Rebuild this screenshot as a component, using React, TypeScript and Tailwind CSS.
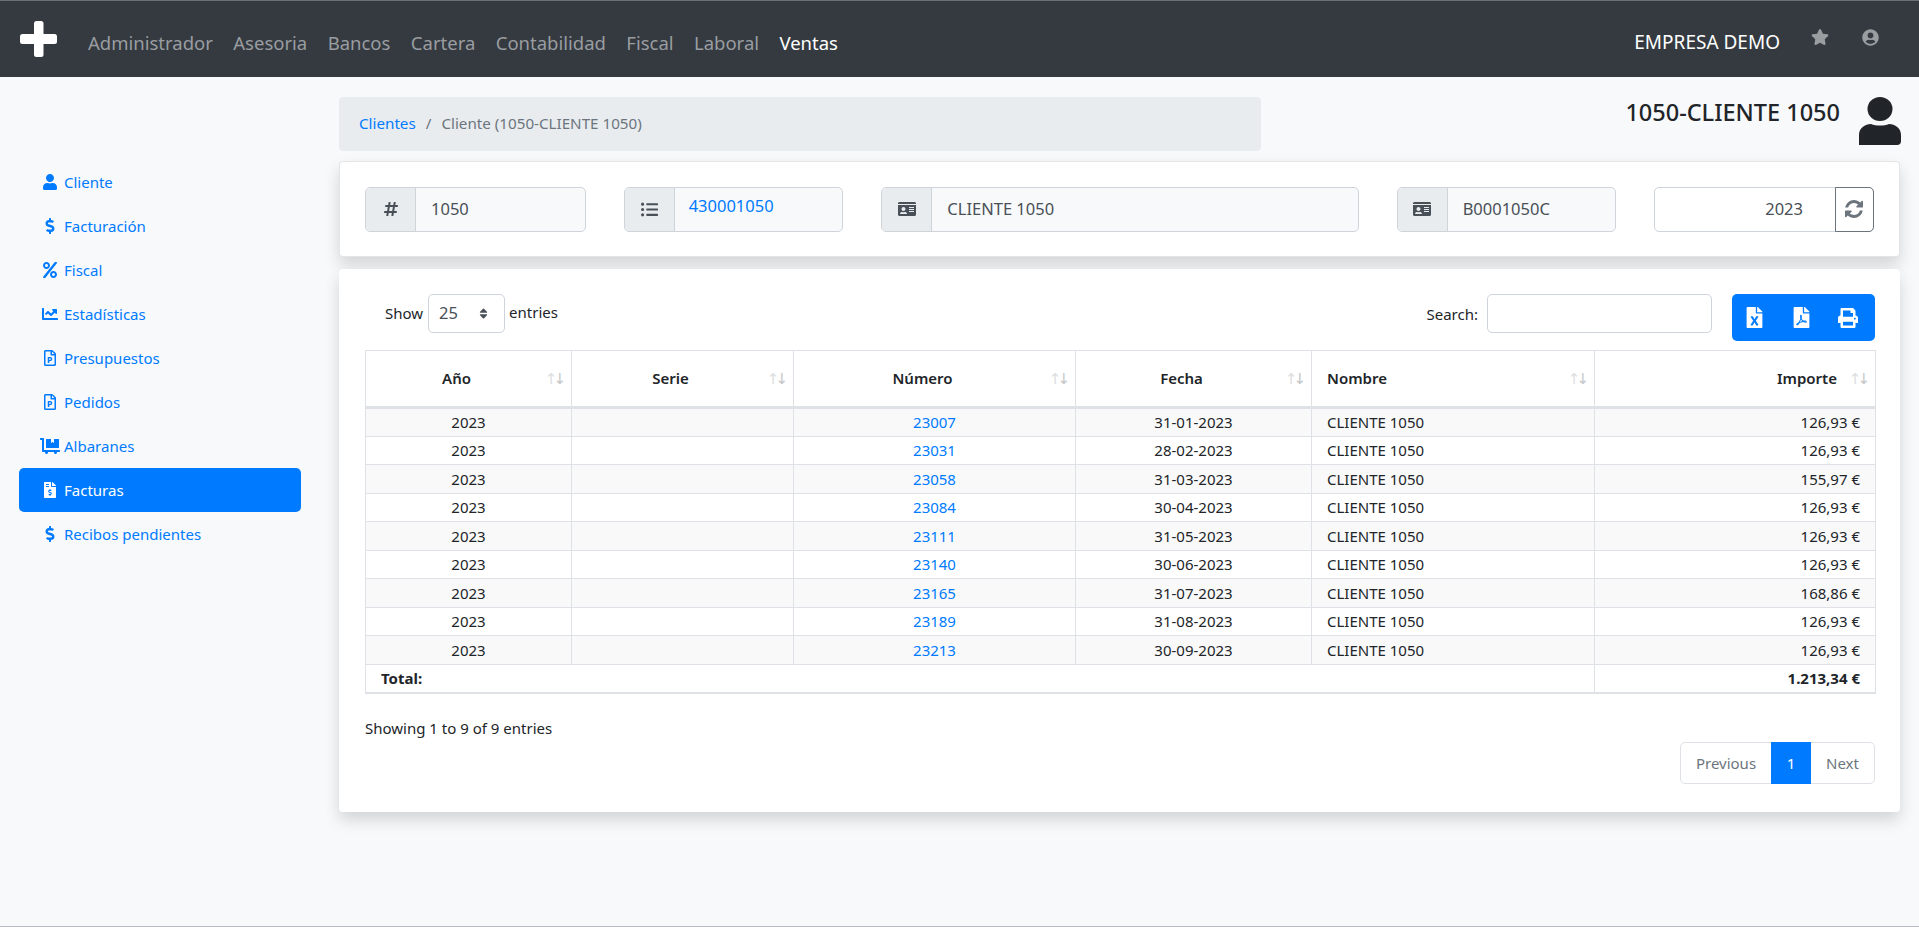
import { FaUser, FaDollarSign, FaPercent, FaChartLine, FaRegFilePowerpoint, FaDollyFlatbed, FaFileInvoiceDollar, FaStar, FaUserCircle, FaHashtag, FaListUl, FaIdCard, FaFileExcel, FaFilePdf, FaPrint, FaSort } from "react-icons/fa";
import type { ReactNode } from "react";

const menu = ["Administrador", "Asesoria", "Bancos", "Cartera", "Contabilidad", "Fiscal", "Laboral"];

const side: { label: string; icon: ReactNode; active?: boolean }[] = [
  { label: "Cliente", icon: <FaUser size={16} /> },
  { label: "Facturación", icon: <FaDollarSign size={16} /> },
  { label: "Fiscal", icon: <FaPercent size={16} /> },
  { label: "Estadísticas", icon: <FaChartLine size={16} /> },
  { label: "Presupuestos", icon: <FaRegFilePowerpoint size={16} /> },
  { label: "Pedidos", icon: <FaRegFilePowerpoint size={16} /> },
  { label: "Albaranes", icon: <FaDollyFlatbed size={20} /> },
  { label: "Facturas", icon: <FaFileInvoiceDollar size={16} />, active: true },
  { label: "Recibos pendientes", icon: <FaDollarSign size={16} /> },
];

const rows = [
  ["23007", "31-01-2023", "126,93 €"],
  ["23031", "28-02-2023", "126,93 €"],
  ["23058", "31-03-2023", "155,97 €"],
  ["23084", "30-04-2023", "126,93 €"],
  ["23111", "31-05-2023", "126,93 €"],
  ["23140", "30-06-2023", "126,93 €"],
  ["23165", "31-07-2023", "168,86 €"],
  ["23189", "31-08-2023", "126,93 €"],
  ["23213", "30-09-2023", "126,93 €"],
];

function SortArrows() {
  return (
    <span className="absolute right-[9px] top-1/2 -translate-y-1/2 font-['DejaVu_Sans',sans-serif] text-[15px] font-normal leading-none tracking-[-4px] text-[#dcdee0]">
      ↑<span className="text-[#c4c6c9]">↓</span>
    </span>
  );
}

function Field({ icon, children, link, className }: { icon: ReactNode; children: ReactNode; link?: boolean; className: string }) {
  return (
    <div className={`flex h-[45px] overflow-hidden rounded-[5px] border border-[#ced4da] bg-[#f8f9fa] text-[16.5px] ${className}`}>
      <div className="flex w-[50px] shrink-0 items-center justify-center border-r border-[#ced4da] bg-[#e9ecef] text-[#495057]">{icon}</div>
      <div className={link ? "pl-[14px] pt-[6px] text-[#007bff]" : "pl-[15px] pt-[9px] text-[#495057]"}>{children}</div>
    </div>
  );
}

export default function App() {
  return (
    <div className="flex h-[927px] flex-col overflow-hidden border-b border-[#b8bcc0] bg-[#f8f9fa] font-['Noto_Sans',sans-serif] text-[15px] text-[#212529]">
      <nav className="flex h-[77px] shrink-0 items-center border-t border-t-[#6c6f73] bg-[#343a40] pl-[20px] pr-[40px]">
        <svg width="37" height="36" viewBox="0 0 37 36" className="fill-white">
          <rect x="14" y="0" width="9.5" height="36" rx="2.5" />
          <rect x="0" y="13" width="37" height="10" rx="2.5" />
        </svg>
        <ul className="ml-[31px] flex gap-[20.4px] pt-[8px] text-[18.5px] text-[#9a9da0]">
          {menu.map((m) => (
            <li key={m}>{m}</li>
          ))}
          <li className="text-white">Ventas</li>
        </ul>
        <span className="ml-auto pt-[7px] text-[19px] text-white">EMPRESA DEMO</span>
        <FaStar size={18} className="ml-[31px] -mt-[4px] text-[#9a9da0]" />
        <FaUserCircle size={17} className="ml-[33px] -mt-[4px] text-[#9a9da0]" />
      </nav>

      <div className="flex flex-1">
        <aside className="w-[339px] shrink-0 pl-[19px] pt-[83px]">
          <ul className="w-[282px]">
            {side.map((s) => (
              <li key={s.label} className={s.active ? "flex h-[44px] items-center rounded-[5px] bg-[#007bff] text-white" : "flex h-[44px] items-center text-[#007bff]"}>
                <span className="flex w-[45px] shrink-0 justify-center pl-[16px]">{s.icon}</span>
                <span>{s.label}</span>
              </li>
            ))}
          </ul>
        </aside>

        <main className="w-[1561px] pt-[20px]">
          <div className="flex h-[64px] items-start justify-between">
            <div className="flex h-[54px] w-[922px] items-center rounded-[4px] bg-[#e9ecef] pb-[2px] pl-[20px] text-[15.2px] text-[#6c757d]">
              <span className="text-[#007bff]">Clientes</span>
              <span className="px-[10px]">/</span>
              <span>Cliente (1050-CLIENTE 1050)</span>
            </div>
            <div className="-mr-[2px] flex items-start">
              <span className="-mt-[2px] text-[23.5px] font-medium">1050-CLIENTE 1050</span>
              <svg width="44" height="48" viewBox="0 0 44 48" className="ml-[18px] fill-[#212529]">
                <ellipse cx="22" cy="12" rx="12.5" ry="12" />
                <path d="M1 48 V38 C1 31 7 27 13 27 C18 29 26 29 31 27 C37 27 43 31 43 38 V44 Q43 48 39 48 Z" />
              </svg>
            </div>
          </div>

          <section className="flex h-[96px] items-center gap-[38px] rounded-[4px] border border-black/10 bg-white px-[25px] shadow-[0_8px_16px_rgba(0,0,0,0.15)]">
            <Field icon={<FaHashtag size={16} />} className="w-[221px]">1050</Field>
            <Field icon={<FaListUl size={17} />} link className="w-[220px]">430001050</Field>
            <Field icon={<FaIdCard size={18} />} className="w-[478px]">CLIENTE 1050</Field>
            <Field icon={<FaIdCard size={18} />} className="w-[220px]">B0001050C</Field>
            <div className="flex h-[45px] w-[220px] rounded-[5px] border border-[#ced4da] bg-white text-[16.5px]">
              <span className="flex-1 pt-[9px] pr-[33px] text-right text-[#495057]">2023</span>
              <span className="-m-px flex w-[39px] items-center justify-center rounded-r-[5px] border border-[#6c757d] text-[#6c757d]">
                <svg width="18" height="18" viewBox="128 128 1536 1536" fill="currentColor">
                  <path d="M1639 1056q0 5-1 7-64 268-268 434.500t-478 166.500q-146 0-282.500-55t-243.500-157l-129 129q-19 19-45 19t-45-19-19-45v-448q0-26 19-45t45-19h448q26 0 45 19t19 45-19 45l-137 137q71 66 161 102t187 36q134 0 250-65t186-179q11-17 53-117 8-23 30-23h192q13 0 22.500 9.500t9.500 22.500zm25-800v448q0 26-19 45t-45 19h-448q-26 0-45-19t-19-45 19-45l138-138q-148-137-349-137-134 0-250 65t-186 179q-11 17-53 117-8 23-30 23h-199q-13 0-22.500-9.500t-9.500-22.500v-7q65-268 270-434.500t480-166.500q146 0 284 55.500t245 156.500l130-129q19-19 45-19t45 19 19 45z" />
                </svg>
              </span>
            </div>
          </section>

          <section className="mt-[12px] h-[543px] rounded-[4px] bg-white px-[25px] pt-[25px] shadow-[0_8px_16px_rgba(0,0,0,0.15)]">
            <div className="flex h-[56px] items-start">
              <div className="ml-[21px] flex items-center gap-[5px]">
                <span>Show</span>
                <span className="flex h-[39px] w-[77px] items-center justify-between rounded-[5px] border border-[#ced4da] pb-[1px] pl-[10px] pr-[14px] text-[16.5px] text-[#495057]">25 <FaSort size={13} /></span>
              </div>
              <span className="ml-[4px] pt-[7px]">entries</span>
              <span className="ml-auto pt-[9px]">Search:</span>
              <span className="ml-[9px] h-[39px] w-[225px] rounded-[5px] border border-[#ced4da]" />
              <div className="ml-[20px] flex h-[47px] w-[143px] items-center gap-[26px] rounded-[5px] bg-[#007bff] pl-[12px] text-white">
                <FaFileExcel size={21} />
                <FaFilePdf size={21} />
                <FaPrint size={20} />
              </div>
            </div>

            <table className="ml-[1px] w-[1510px] table-fixed border-collapse border-b-2 border-[#dee2e6]">
              <colgroup>
                <col className="w-[206px]" />
                <col className="w-[222px]" />
                <col className="w-[282px]" />
                <col className="w-[236px]" />
                <col className="w-[283px]" />
                <col className="w-[281px]" />
              </colgroup>
              <thead>
                <tr className="h-[57px] border-b-[3px] border-[#dee2e6]">
                  {["Año", "Serie", "Número", "Fecha", "Nombre", "Importe"].map((h, i) => (
                    <th key={h} className={`relative border border-[#dee2e6] font-semibold ${i === 4 ? "pl-[15px] text-left" : i === 5 ? "pr-[38px] text-right" : "pr-[24px] text-center"}`}>
                      {h}
                      <SortArrows />
                    </th>
                  ))}
                </tr>
              </thead>
              <tbody>
                {rows.map((r, i) => (
                  <tr key={r[0]} className={i % 2 === 0 ? "h-[28.5px] bg-[#f9f9f9]" : "h-[28.5px]"}>
                    <td className="border border-[#dee2e6] text-center">2023</td>
                    <td className="border border-[#dee2e6]" />
                    <td className="border border-[#dee2e6] text-center text-[#007bff]">{r[0]}</td>
                    <td className="border border-[#dee2e6] text-center">{r[1]}</td>
                    <td className="border border-[#dee2e6] pl-[15px]">CLIENTE 1050</td>
                    <td className="border border-[#dee2e6] pr-[15px] text-right">{r[2]}</td>
                  </tr>
                ))}
                <tr className="h-[28.5px] font-bold">
                  <td colSpan={5} className="border border-[#dee2e6] pl-[15px]">Total:</td>
                  <td className="border border-[#dee2e6] pr-[15px] text-right">1.213,34 €</td>
                </tr>
              </tbody>
            </table>

            <div className="ml-[1px] mt-[23px]">Showing 1 to 9 of 9 entries</div>
            <div className="mt-[3px] flex justify-end">
              <div className="flex h-[42px] items-center rounded-[5px] border border-[#dee2e6] text-[#6c757d]">
                <span className="w-[90px] text-center">Previous</span>
                <span className="flex h-[42px] w-[40px] items-center justify-center bg-[#007bff] text-white">1</span>
                <span className="w-[63px] text-center">Next</span>
              </div>
            </div>
          </section>
        </main>
      </div>
    </div>
  );
}
